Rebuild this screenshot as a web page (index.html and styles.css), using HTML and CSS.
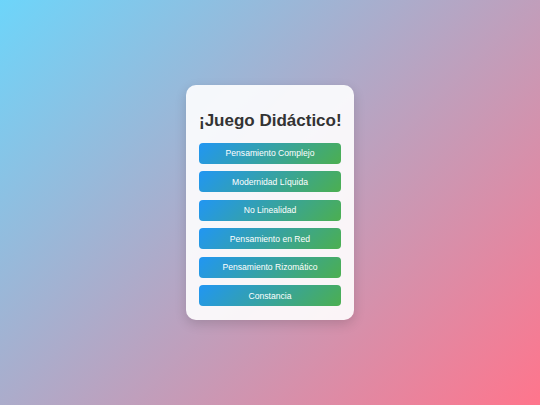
FILE: index.html
```html
<html lang="es">
<head>
    <meta charset="UTF-8">
    <meta name="viewport" content="width=device-width, initial-scale=1.0">
    <title>Juego Didáctico</title>
    <link rel="stylesheet" href="styles.css">
</head>
<body>
<div class="container">
    <h1 class="title">¡Juego Didáctico!</h1>
    <div class="menu">
        <button class="btn">Pensamiento Complejo</button>
        <button class="btn">Modernidad Líquida</button>
        <button class="btn">No Linealidad</button>
        <button class="btn">Pensamiento en Red</button>
        <button class="btn">Pensamiento Rizomático</button>
        <button class="btn">Constancia</button>
    </div>
</div>
</body>
</html>
```
FILE: styles.css
```css
body {
    margin: 0;
    height: 100vh;
    font-family: "Liberation Sans", Arial, sans-serif;
    display: flex;
    justify-content: center;
    align-items: center;
    background: linear-gradient(135deg, #6dd5fa, #ff758c);
}

.container {
    width: 142px;
    padding: 13px 13px 14px;
    background: rgba(255, 255, 255, 0.9);
    border-radius: 10px;
    box-shadow: 0 4px 12px rgba(0, 0, 0, 0.15);
    text-align: center;
}

.title {
    font-size: 17px;
    color: #333;
    margin: 13px 0 12px;
    white-space: nowrap;
}

.menu {
    display: flex;
    flex-direction: column;
    gap: 7.6px;
}

.btn {
    height: 21px;
    border: none;
    border-radius: 4px;
    background: linear-gradient(135deg, #2196f3, #4caf50);
    color: white;
    font-family: "Liberation Sans", Arial, sans-serif;
    font-size: 8.6px;
    cursor: pointer;
}
```
